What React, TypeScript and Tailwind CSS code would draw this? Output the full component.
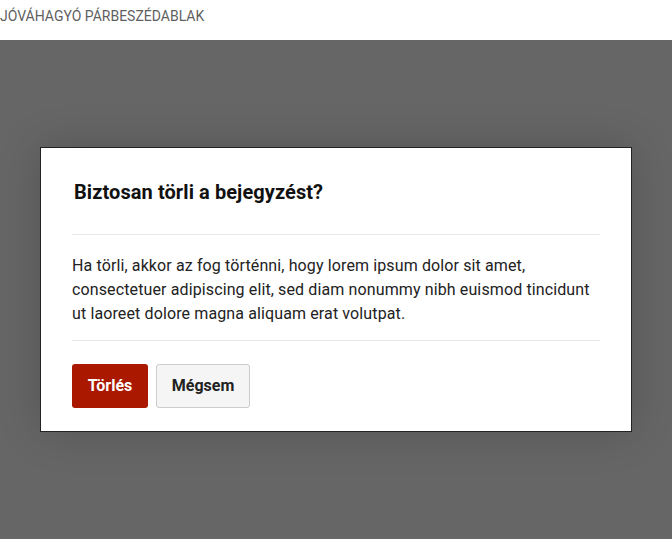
export default function App() {
  return (
    <div className="w-[672px] h-[539px] flex flex-col bg-white" style={{ fontFamily: "Roboto, 'Noto Sans', sans-serif" }}>
      <div className="h-10 shrink-0 bg-white flex items-start pt-[6px] text-[14px] leading-[20px] text-[#5f5f5f]">
        JÓVÁHAGYÓ PÁRBESZÉDABLAK
      </div>
      <div className="flex-1 bg-[#666666] flex items-center justify-center">
        <div className="w-[592px] bg-white border border-[#222] shadow-[0_0_40px_rgba(0,0,0,0.18)] px-[31px] pt-[30px] pb-[23px]">
          <h2 className="text-[20px] leading-[28px] font-bold text-[#111] pl-[2px] tracking-[0.08px]">Biztosan törli a bejegyzést?</h2>
          <div className="h-px bg-[#e8e8e8] mt-[28px]" />
          <p className="text-[16px] leading-[24px] text-[#222] mt-[19px] mb-[14px] pr-[6px] tracking-[0.12px]">
            Ha törli, akkor az fog történni, hogy lorem ipsum dolor sit amet, consectetuer adipiscing elit, sed diam nonummy nibh euismod tincidunt ut laoreet dolore magna aliquam erat volutpat.
          </p>
          <div className="h-px bg-[#e8e8e8]" />
          <div className="flex gap-2 mt-[23px]">
            <button className="h-11 w-[76px] rounded-[3px] bg-[#aa1800] text-white font-bold text-[16px]">Törlés</button>
            <button className="h-11 w-[94px] rounded-[3px] bg-[#f5f5f5] border border-[#cccccc] text-[#222] font-bold text-[16px]">Mégsem</button>
          </div>
        </div>
      </div>
    </div>
  );
}
